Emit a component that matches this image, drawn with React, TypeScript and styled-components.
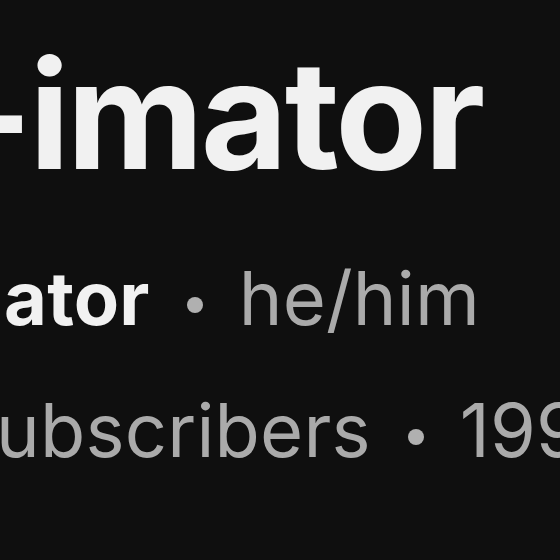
import React from "react";
import styled, { createGlobalStyle } from "styled-components";

const Global = createGlobalStyle`
  html, body {
    margin: 0;
    padding: 0;
    background: #0f0f0f;
  }
  body {
    font-family: Inter, Roboto, "Liberation Sans", Arial, sans-serif;
  }
`;

const Page = styled.div`
  width: 560px;
  height: 560px;
  overflow: hidden;
  background: #0f0f0f;
  display: flex;
  flex-direction: column;
`;

const ChannelName = styled.h1`
  margin: 40px 0 0 -38px;
  font-size: 150px;
  line-height: 1;
  font-weight: 700;
  color: #f1f1f1;
  white-space: nowrap;
  letter-spacing: -3px;
`;

const MetaRow = styled.div<{ $top: number; $shift: number }>`
  margin-top: ${(p) => p.$top}px;
  margin-left: ${(p) => p.$shift}px;
  font-size: 74px;
  line-height: 1;
  color: #aaaaaa;
  white-space: nowrap;
  letter-spacing: 0.2px;
`;

const Handle = styled.span`
  color: #f1f1f1;
  font-weight: 700;
`;

const Dot = styled.span`
  display: inline-block;
  width: 16px;
  height: 16px;
  border-radius: 50%;
  background: #b0b0b0;
  vertical-align: middle;
  margin: 0 36px 0 37px;
`;

export default function App() {
  return (
    <>
      <Global />
      <Page>
        <ChannelName>-imator</ChannelName>
        <MetaRow $top={71} $shift={4}>
          <Handle>ator</Handle>
          <Dot />
          he/him
        </MetaRow>
        <MetaRow $top={58} $shift={-4}>
          ubscribers
          <Dot />
          199 videos
        </MetaRow>
      </Page>
    </>
  );
}
